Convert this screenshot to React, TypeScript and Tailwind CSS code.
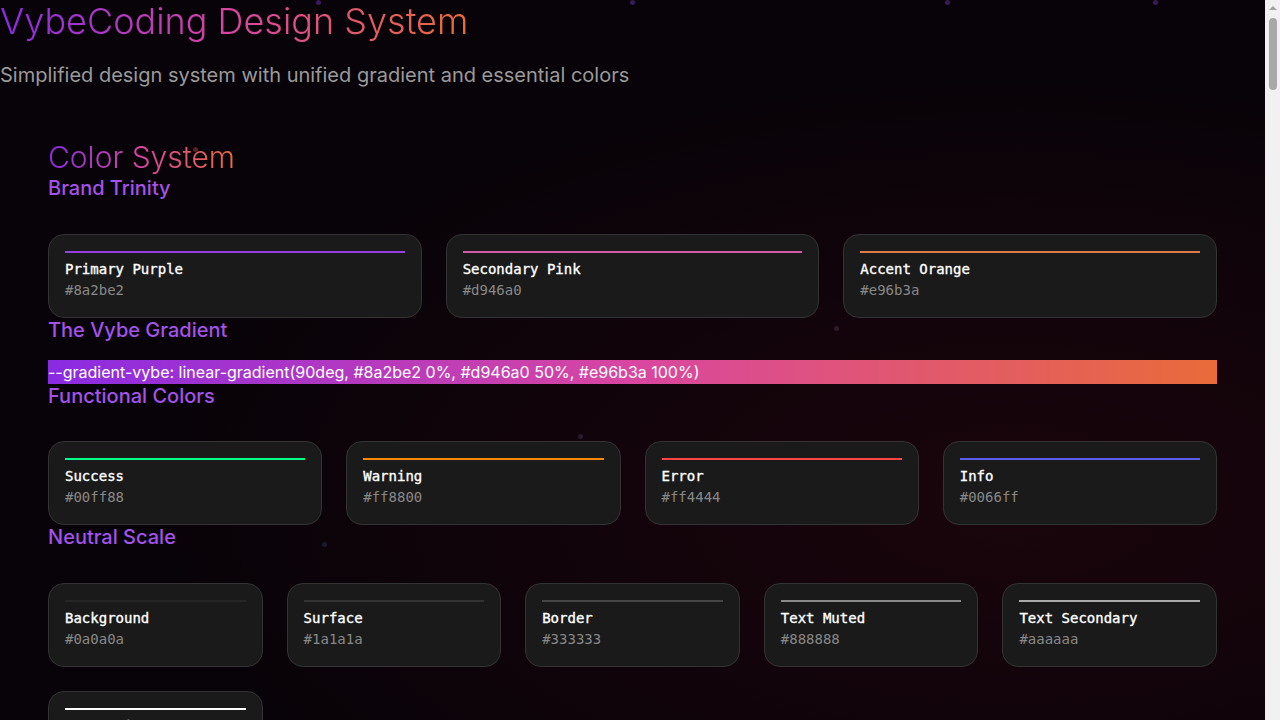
import React from 'react';

interface Swatch {
  name: string;
  hex: string;
  line: string;
}

const brand: Swatch[] = [
  { name: 'Primary Purple', hex: '#8a2be2', line: '#9440e0' },
  { name: 'Secondary Pink', hex: '#d946a0', line: '#d35aa8' },
  { name: 'Accent Orange', hex: '#e96b3a', line: '#e07a48' },
];

const functional: Swatch[] = [
  { name: 'Success', hex: '#00ff88', line: '#00ff88' },
  { name: 'Warning', hex: '#ff8800', line: '#ff8800' },
  { name: 'Error', hex: '#ff4444', line: '#ff4444' },
  { name: 'Info', hex: '#0066ff', line: '#5b5bf0' },
];

const neutral: Swatch[] = [
  { name: 'Background', hex: '#0a0a0a', line: '#262626' },
  { name: 'Surface', hex: '#1a1a1a', line: '#333333' },
  { name: 'Border', hex: '#333333', line: '#454545' },
  { name: 'Text Muted', hex: '#888888', line: '#888888' },
  { name: 'Text Secondary', hex: '#aaaaaa', line: '#aaaaaa' },
  { name: 'Text Primary', hex: '#ffffff', line: '#ffffff' },
];

// decorative particles floating over the background
const dots = [
  { x: 316, y: 0, c: '#3a1a5a' },
  { x: 630, y: 0, c: '#3a1a5a' },
  { x: 945, y: 0, c: '#3a1a5a' },
  { x: 1153, y: 0, c: '#3a1a5a' },
  { x: 193, y: 147, c: '#5a1e24' },
  { x: 1090, y: 254, c: '#4a1c1c' },
  { x: 834, y: 326, c: '#2e1a2a' },
  { x: 578, y: 434, c: '#2a1a2e' },
  { x: 322, y: 542, c: '#1e1a2e' },
  { x: 129, y: 593, c: '#3a1c6a' },
];

function SwatchCard({ s }: { s: Swatch }) {
  return (
    <div className="bg-[#1a1a1a] border border-[#333333] rounded-2xl px-4 pt-4 pb-4">
      <div className="h-[2px] w-full" style={{ backgroundColor: s.line }}></div>
      <div className="mt-[6px] text-sm leading-[21px] font-medium text-white [-webkit-text-stroke:0.35px_#ffffff] font-['DejaVu_Sans_Mono',monospace]">
        {s.name}
      </div>
      <div className="text-sm leading-[21px] text-[#888888] font-['DejaVu_Sans_Mono',monospace]">
        {s.hex}
      </div>
    </div>
  );
}

function SubHeading({ children }: { children: React.ReactNode }) {
  return (
    <h3 className="text-[20px] leading-6 font-medium text-[#a352ea]">{children}</h3>
  );
}

export default function App() {
  return (
    <div className="flex h-screen bg-[#080308] font-['Inter',sans-serif]">
      <div className="flex-1 overflow-y-auto [scrollbar-width:none] bg-[radial-gradient(ellipse_at_80%_70%,rgba(60,8,20,0.35),transparent_60%)]">
        <div className="relative">
          {dots.map((d, i) => (
            <div
              key={i}
              className="absolute w-[5px] h-[5px] rounded-full"
              style={{ left: d.x, top: d.y, backgroundColor: d.c }}
            ></div>
          ))}

          <h1 className="relative inline-block text-[36px] leading-[43px] font-light bg-[linear-gradient(90deg,#8a2be2_0%,#d946a0_50%,#e96b3a_100%)] bg-clip-text text-transparent">
            VybeCoding Design System
          </h1>
          <p className="relative mt-[18px] text-[20px] leading-[28px] text-[#9a9a9a]">
            Simplified design system with unified gradient and essential colors
          </p>

          <section className="relative px-12 pt-[50px] pb-12">
            <h2 className="inline-block text-[30px] leading-[37px] font-light bg-[linear-gradient(90deg,#8a2be2_0%,#d946a0_50%,#e96b3a_100%)] bg-clip-text text-transparent">
              Color System
            </h2>

            <SubHeading>Brand Trinity</SubHeading>
            <div className="mt-[34px] grid grid-cols-3 gap-6">
              {brand.map((s) => (
                <SwatchCard key={s.name} s={s} />
              ))}
            </div>

            <SubHeading>The Vybe Gradient</SubHeading>
            <div className="mt-[18px] h-6 bg-[linear-gradient(90deg,#8a2be2_0%,#d946a0_50%,#e96b3a_100%)] text-white text-base leading-6">
              --gradient-vybe: linear-gradient(90deg, #8a2be2 0%, #d946a0 50%, #e96b3a 100%)
            </div>

            <SubHeading>Functional Colors</SubHeading>
            <div className="mt-[33px] grid grid-cols-4 gap-6">
              {functional.map((s) => (
                <SwatchCard key={s.name} s={s} />
              ))}
            </div>

            <SubHeading>Neutral Scale</SubHeading>
            <div className="mt-[34px] grid grid-cols-5 gap-6">
              {neutral.map((s) => (
                <SwatchCard key={s.name} s={s} />
              ))}
            </div>
          </section>
        </div>
      </div>

      {/* page scrollbar */}
      <div className="w-[15px] shrink-0 bg-[#f1f1f1] flex flex-col items-center">
        <div className="mt-[6px] w-0 h-0 border-l-[4px] border-r-[4px] border-b-[4px] border-l-transparent border-r-transparent border-b-[#a3a3a3]"></div>
        <div className="mt-[8px] w-[8px] h-[72px] rounded-full bg-[#a8a8a8]"></div>
      </div>
    </div>
  );
}
